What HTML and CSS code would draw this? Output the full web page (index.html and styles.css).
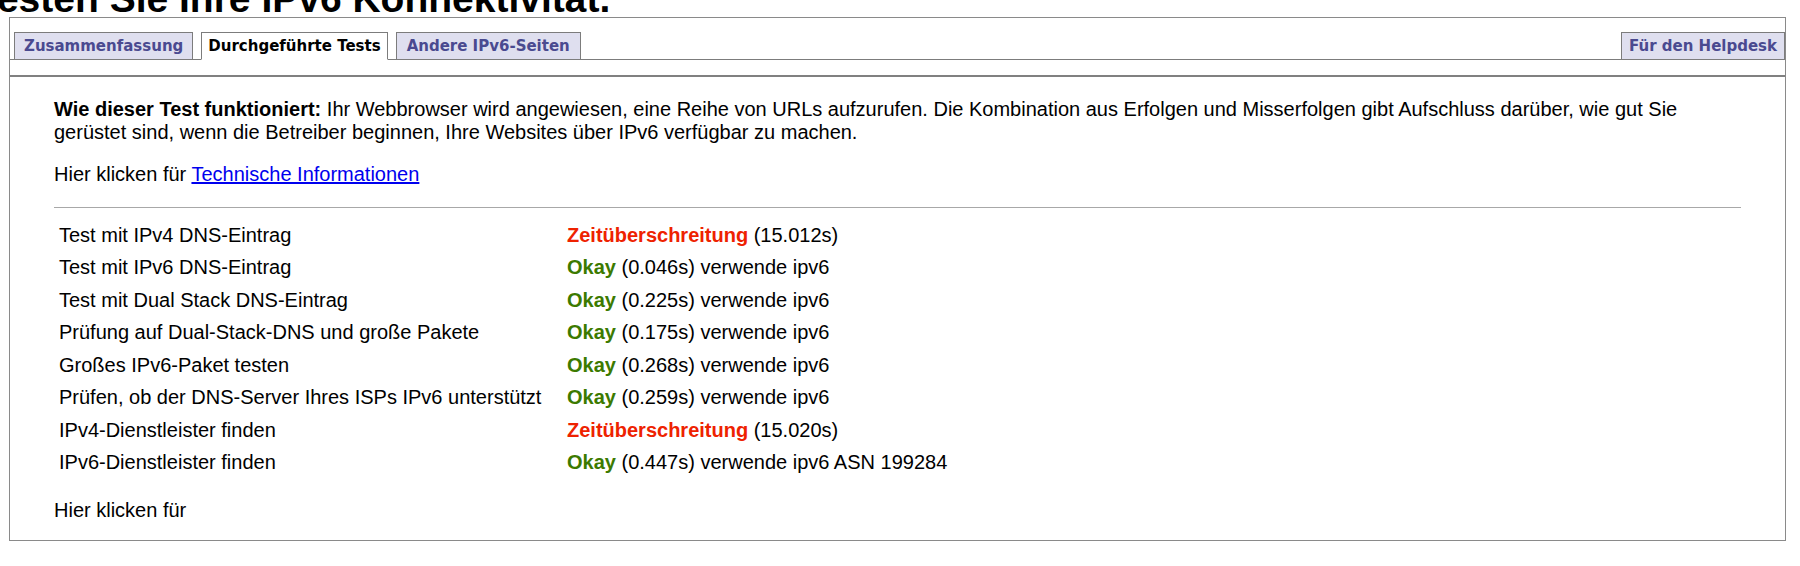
FILE: index.html
```html
<!DOCTYPE html>
<html lang="de">
<head>
<meta charset="utf-8">
<title>Testen Sie Ihre IPv6 Konnektivität.</title>
<link rel="stylesheet" href="styles.css">
</head>
<body>
<h1 class="title">Testen Sie Ihre IPv6 Konnektivität.</h1>
<div class="panel">
  <div class="tabbar">
    <ul class="tabs">
      <li class="tab"><a href="#" class="tab-wide">Zusammenfassung</a></li>
      <li class="tab active"><a href="#">Durchgeführte Tests</a></li>
      <li class="tab"><a href="#" class="tab-wider">Andere IPv6-Seiten</a></li>
    </ul>
    <ul class="tabs tabs-right">
      <li class="tab"><a href="#" class="tab-narrow">Für den Helpdesk</a></li>
    </ul>
  </div>
  <div class="tabgap"></div>
  <div class="content">
    <p class="intro"><b>Wie dieser Test funktioniert:</b> Ihr Webbrowser wird angewiesen, eine Reihe von URLs aufzurufen. Die Kombination aus Erfolgen und Misserfolgen gibt Aufschluss darüber, wie gut Sie gerüstet sind, wenn die Betreiber beginnen, Ihre Websites über IPv6 verfügbar zu machen.</p>
    <p class="more">Hier klicken für <a href="#" class="link">Technische Informationen</a></p>
    <hr class="rule">
    <table class="results">
      <tr><td class="name">Test mit IPv4 DNS-Eintrag</td><td class="res"><b class="bad">Zeitüberschreitung</b> (15.012s)</td></tr>
      <tr><td class="name">Test mit IPv6 DNS-Eintrag</td><td class="res"><b class="ok">Okay</b> (0.046s) verwende ipv6</td></tr>
      <tr><td class="name">Test mit Dual Stack DNS-Eintrag</td><td class="res"><b class="ok">Okay</b> (0.225s) verwende ipv6</td></tr>
      <tr><td class="name">Prüfung auf Dual-Stack-DNS und große Pakete</td><td class="res"><b class="ok">Okay</b> (0.175s) verwende ipv6</td></tr>
      <tr><td class="name">Großes IPv6-Paket testen</td><td class="res"><b class="ok">Okay</b> (0.268s) verwende ipv6</td></tr>
      <tr><td class="name">Prüfen, ob der DNS-Server Ihres ISPs IPv6 unterstützt</td><td class="res"><b class="ok">Okay</b> (0.259s) verwende ipv6</td></tr>
      <tr><td class="name">IPv4-Dienstleister finden</td><td class="res"><b class="bad">Zeitüberschreitung</b> (15.020s)</td></tr>
      <tr><td class="name">IPv6-Dienstleister finden</td><td class="res"><b class="ok">Okay</b> (0.447s) verwende ipv6 ASN 199284</td></tr>
    </table>
    <p class="more last">Hier klicken für</p>
  </div>
</div>
</body>
</html>
```
FILE: styles.css
```css
html, body {
  margin: 0;
  padding: 0;
  background: #ffffff;
  overflow: hidden;
}
body {
  font-family: "Liberation Sans", Arial, sans-serif;
  font-size: 20px;
  line-height: 22.66px;
  color: #000000;
}
.title {
  font-family: "Liberation Sans", Arial, sans-serif;
  font-size: 39px;
  font-weight: bold;
  line-height: 28px;
  height: 28px;
  margin: -15px 0 0 -24px;
  white-space: nowrap;
}
.panel {
  margin: 4px 14px 0 9px;
  border: 1px solid #8a8a8a;
}
.tabbar {
  display: flex;
  justify-content: space-between;
  padding: 14px 0 0 4px;
  border-bottom: 1px solid #7c7c7c;
}
.tabs {
  display: flex;
  gap: 8px;
  list-style: none;
  margin: 0 0 -1px 0;
  padding: 0;
}
.tab {
  border: 1px solid #7c7c7c;
  background: #dfdfef;
}
.tab a {
  display: block;
  padding: 4px 8px;
  font-family: "DejaVu Sans", Verdana, sans-serif;
  font-size: 15px;
  font-weight: bold;
  line-height: 18px;
  color: #4a4a90;
  text-decoration: none;
}
.tab a.tab-wide {
  padding: 4px 9px;
}
.tab a.tab-wider {
  padding: 4px 10px;
}
.tab a.tab-narrow {
  padding: 4px 7px;
}
.tab.active {
  background: #ffffff;
  border-bottom-color: #ffffff;
}
.tab.active a {
  color: #000000;
  padding: 4px 6px;
}
.tabgap {
  height: 15px;
}
.content {
  border-top: 2px solid #808080;
  padding: 21px 44px 18px 44px;
}
.intro {
  margin: 0;
}
.more {
  margin: 19.5px 0 0 0;
}
.more.last {
  margin-top: 20.5px;
}
.link {
  color: #0000ee;
  text-decoration: underline;
}
.rule {
  margin: 22px 0 0 0;
  border: 0;
  border-top: 1px solid #a8a8a8;
  height: 0;
}
.results {
  margin-top: 10.5px;
  border-collapse: collapse;
  border-spacing: 0;
}
.results td {
  padding: 5px;
  line-height: 22.5px;
  vertical-align: top;
  white-space: nowrap;
}
.results td.name {
  width: 498px;
}
.bad {
  color: #ee2200;
}
.ok {
  color: #3c7a00;
}
```
